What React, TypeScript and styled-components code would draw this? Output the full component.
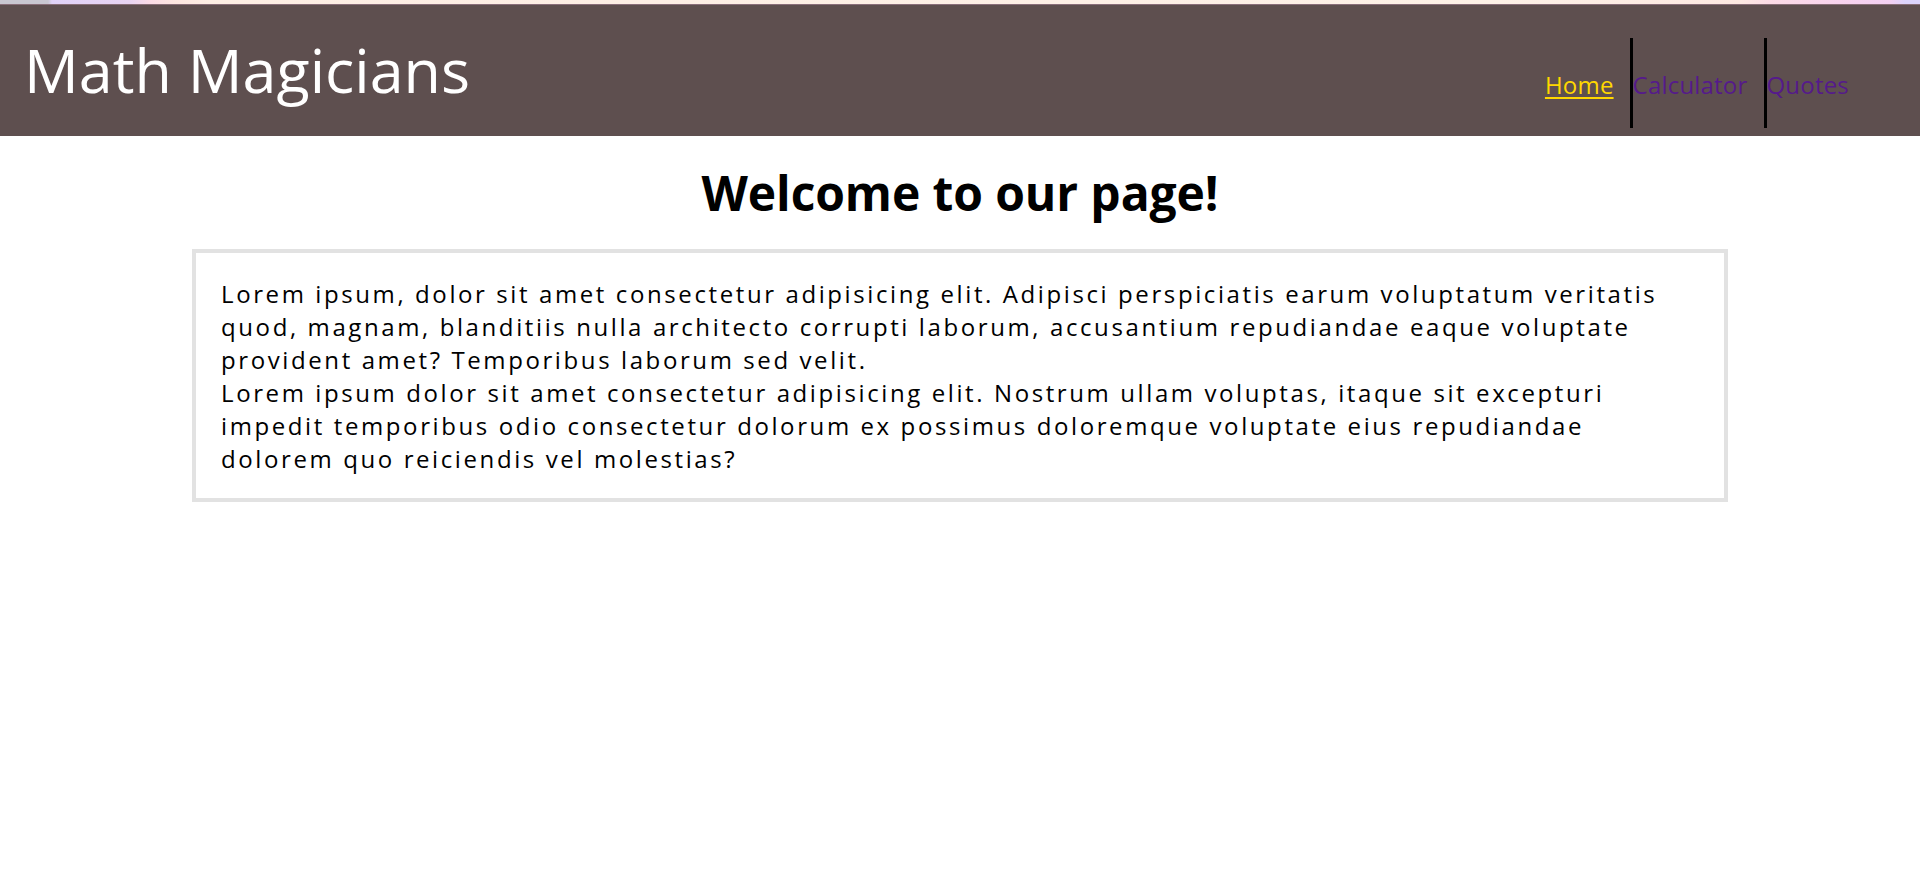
import React from "react";
import styled, { createGlobalStyle } from "styled-components";

const GlobalStyle = createGlobalStyle`
  html, body {
    margin: 0;
    padding: 0;
    background: #ffffff;
  }
  body {
    font-family: "Open Sans", "Noto Sans", sans-serif;
    color: #000000;
  }
  * { box-sizing: border-box; }
`;

const TopStrip = styled.div`
  height: 5px;
  background: linear-gradient(
    to right,
    #c9c7d1 0px,
    #c9c7d1 48px,
    #e0d2f8 52px,
    #e8d4f2 130px,
    #fbdbe6 150px,
    #fde6e0 175px,
    #fdeee4 210px,
    #fdf1e7 1500px,
    #fde9e2 1740px,
    #fcdbe6 1770px,
    #f8d3ee 1840px,
    #f3d0f2 1890px,
    #dcd4fc 1905px,
    #dcd4fc 1920px
  );
  border-bottom: 1px solid #8a6f7a;
`;

const Header = styled.header`
  display: flex;
  justify-content: space-between;
  align-items: flex-start;
  height: 131px;
  background: #5e4f4f;
  padding: 0 55px 0 24px;
`;

const Title = styled.h1`
  margin: 23px 0 0;
  font-family: "Open Sans", sans-serif;
  font-weight: 400;
  font-size: 61px;
  line-height: normal;
  color: #ffffff;
`;

const NavList = styled.ul`
  display: flex;
  list-style: none;
  margin: 33px 0 0;
  padding: 0;
`;

const NavItem = styled.li<{ $divider?: boolean }>`
  display: flex;
  align-items: center;
  height: 90px;
  padding: 2px 16px 0 0;
  border-left: ${(p) => (p.$divider ? "3px solid #000000" : "none")};
`;

const NavLink = styled.a<{ $active?: boolean }>`
  font-family: "Open Sans", sans-serif;
  font-size: 24px;
  line-height: normal;
  letter-spacing: 0.2px;
  color: ${(p) => (p.$active ? "#ffd700" : "#551a8b")};
  text-decoration: ${(p) => (p.$active ? "underline" : "none")};
  text-underline-offset: 3px;
  text-decoration-thickness: 2px;
  cursor: pointer;
`;

const Main = styled.main`
  display: flex;
  flex-direction: column;
  align-items: center;
`;

const Heading = styled.h2`
  margin: 24px 0;
  font-family: "Open Sans", sans-serif;
  font-weight: 700;
  font-size: 48px;
  line-height: normal;
  letter-spacing: -0.1px;
  text-align: center;
`;

const TextBox = styled.section`
  width: 80%;
  border: 4px solid #e2e2e2;
  padding: 24px 24px 23px 25px;
`;

const Paragraph = styled.p`
  margin: 0;
  font-family: "Open Sans", sans-serif;
  font-size: 24px;
  line-height: 33px;
  letter-spacing: 2.6px;
  font-weight: 400;
`;

export default function App() {
  return (
    <>
      <GlobalStyle />
      <TopStrip />
      <Header>
        <Title>Math Magicians</Title>
        <nav>
          <NavList>
            <NavItem>
              <NavLink $active>Home</NavLink>
            </NavItem>
            <NavItem $divider>
              <NavLink>Calculator</NavLink>
            </NavItem>
            <NavItem $divider>
              <NavLink>Quotes</NavLink>
            </NavItem>
          </NavList>
        </nav>
      </Header>
      <Main>
        <Heading>Welcome to our page!</Heading>
        <TextBox>
          <Paragraph>
            Lorem ipsum, dolor sit amet consectetur adipisicing elit. Adipisci
            perspiciatis earum voluptatum veritatis quod, magnam, blanditiis
            nulla architecto corrupti laborum, accusantium repudiandae eaque
            voluptate provident amet? Temporibus laborum sed velit.
          </Paragraph>
          <Paragraph>
            Lorem ipsum dolor sit amet consectetur adipisicing elit. Nostrum
            ullam voluptas, itaque sit excepturi impedit temporibus odio
            consectetur dolorum ex possimus doloremque voluptate eius
            repudiandae dolorem quo reiciendis vel molestias?
          </Paragraph>
        </TextBox>
      </Main>
    </>
  );
}
